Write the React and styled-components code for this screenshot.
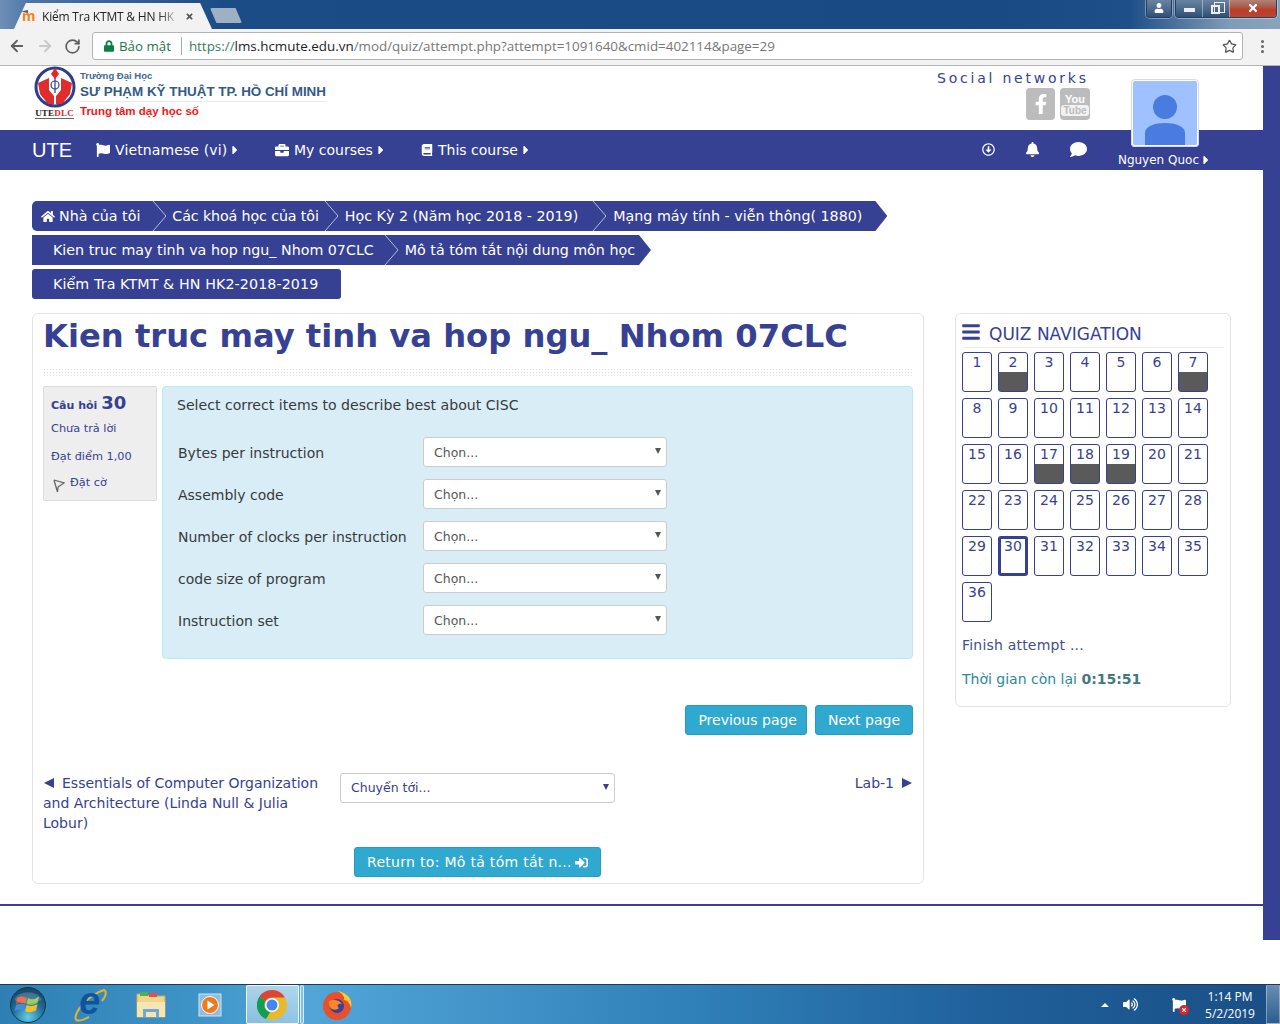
import React from 'react';
import styled, { createGlobalStyle } from 'styled-components';
import { FaHome, FaFlag, FaBriefcase, FaBook, FaBell, FaComment, FaRegArrowAltCircleDown, FaCaretRight, FaBars, FaSignInAlt, FaFacebookF, FaLock, FaTimes, FaUser, FaVolumeUp } from 'react-icons/fa';
import { ArrowLeft, ArrowRight, RotateCw, Star as StarIcon } from 'lucide-react';

const BLUE = '#364193';
const Global = createGlobalStyle`
  html, body { margin: 0; padding: 0; background: #fff; overflow: hidden; }
  * { box-sizing: border-box; }
  body { font-family: "DejaVu Sans", Verdana, sans-serif; font-size: 14px; color: #373a3c; }
`;
const Screen = styled.div`width: 1280px; height: 1024px; display: flex; flex-direction: column; overflow: hidden;`;

/* browser chrome */
const TabBar = styled.div`
  height: 29px; flex: none; display: flex; align-items: flex-end; padding-left: 14px; position: relative;
  background: linear-gradient(90deg, #6f8fb6 0, #4d75a6 30px, #1c4c86 220px, #1a4a84 1000px, #1f4f88 1130px, #7f9bb8 1230px, #8aa3bd 1280px);
`;
const Tab = styled.div`
  width: 198px; height: 26px; background: #f2f2f2; display: flex; align-items: center; padding: 0 0 0 8px; gap: 4px;
  clip-path: polygon(0 100%, 6% 0, 94% 0, 100% 100%);
  font: 12px "Open Sans", "Noto Sans", sans-serif; color: #222;
`;
const Favicon = styled.span`
  position: relative; color: #f98012; font: bold 15px/1 "Liberation Sans", sans-serif; width: 16px; flex: none; margin-top: -1px;
  &::before { content: ''; position: absolute; left: -1px; top: 2px; width: 7px; height: 3px; background: #555; clip-path: polygon(0 50%, 100% 0, 100% 100%); }
`;
const TabTitle = styled.span`width: 133px; flex: none; white-space: nowrap; letter-spacing: -.2px; mask-image: linear-gradient(90deg, #000 88%, rgba(0,0,0,.25) 100%);`;
const TabClose = styled(FaTimes)`color: #555; width: 9px; height: 9px; margin-left: 6px; flex: none;`;
const NewTab = styled.div`
  width: 32px; height: 15px; margin: 0 0 6px -2px; background: #9fafc4; border-radius: 2px;
  clip-path: polygon(0 0, 80% 0, 100% 100%, 20% 100%);
`;
const WinButtons = styled.div`position: absolute; right: 3px; top: -1px; display: flex; gap: 3px;`;
const WinGroup = styled.div`display: flex; height: 19px; border: 1px solid #2c3e58; border-top: 0; border-radius: 0 0 4px 4px; overflow: hidden; box-shadow: 0 0 0 1px rgba(255,255,255,.35);`;
const WinBtn = styled.div`
  width: ${p => p.$w}px; display: flex; align-items: center; justify-content: center; color: #fff;
  background: ${p => p.$red ? 'linear-gradient(#b0897f, #a85a48 45%, #c23a22 60%, #b3463a)' : 'linear-gradient(#6d86a2, #4f6d90 50%, #2e4f78)'};
  border-left: ${p => p.$first ? '0' : '1px solid rgba(255,255,255,.4)'};
`;
const MinBar = styled.span`display: block; width: 11px; height: 4px; background: #eee; margin-top: 4px;`;
const MaxBox = styled.span`
  position: relative; display: block; width: 9px; height: 9px; border: 2px solid #eee; margin: 2px 0 0 -2px;
  &::after { content: ''; position: absolute; left: 1px; top: -5px; width: 9px; height: 9px; border: 1px solid #eee; }
`;
const Toolbar = styled.div`
  height: 37px; flex: none; background: #f2f2f2; border-bottom: 1px solid #b5b5b5; display: flex; align-items: center; padding: 0 0 2px 8px;
`;
const NavIcon = styled.span`width: 18px; margin-right: 10px; display: flex; color: ${p => p.$off ? '#c8c8c8' : '#5f5f5f'};`;
const Omni = styled.div`
  width: 1151px; height: 28px; background: #fff; border: 1px solid #b4b4b4; border-radius: 3px; display: flex; align-items: center; padding: 0 5px 0 11px;
  font: 13.4px "Open Sans", "Noto Sans", sans-serif; white-space: nowrap;
`;
const Lock = styled(FaLock)`color: #0b8043; width: 10px; height: 12px; margin-right: 5px;`;
const Secure = styled.span`color: #1a7a4a; font-size: 13.3px; padding-right: 10px; border-right: 1px solid #aaa; margin-right: 7px; line-height: 18px;`;
const Https = styled.span`color: #2f7f5f;`;
const Host = styled.span`color: #222;`;
const UrlRest = styled.span`color: #777; flex: 1;`;
const Star = styled(StarIcon)`color: #555; width: 15px; height: 15px;`;
const Dots = styled.span`margin-left: 18px; display: flex; flex-direction: column; gap: 2px;`;
const Dot = styled.i`display: block; width: 3px; height: 3px; border-radius: 50%; background: #666;`;

/* page */
const Viewport = styled.div`flex: 1; display: flex; min-height: 0;`;
const Page = styled.div`width: 1263px; flex: none; display: flex; flex-direction: column;`;
const Stripe = styled.div`width: 17px; height: 874px; background: ${BLUE};`;
const Header = styled.header`position: relative; height: 64px; display: flex; justify-content: space-between; padding-left: 33px;`;
const Logo = styled.div`display: flex; gap: 4px;`;
const LogoMark = styled.div`width: 43px; display: flex; flex-direction: column; align-items: center;`;
const LogoTag = styled.div`font: bold 9px/9px "Liberation Serif", serif; color: #222; border-bottom: 1px solid #666; margin-top: 1px; white-space: nowrap; letter-spacing: .2px;`;
const LogoRed = styled.span`color: #d62c2c;`;
const LogoText = styled.div`padding-top: 4px; font-family: "Liberation Sans", sans-serif;`;
const LogoSmall = styled.div`font-size: 9.5px; line-height: 11px; font-weight: bold; color: #3f6690;`;
const LogoBig = styled.div`font-size: 13.4px; line-height: 17px; font-weight: bold; color: #345a88; padding: 2px 0 1px; border-bottom: 1px solid #e8e8e8; white-space: nowrap; width: 246px;`;
const LogoRedText = styled.div`font-size: 11.5px; font-weight: bold; color: #f01818; line-height: 14px; padding-top: 2px;`;
const Social = styled.div`width: 327px; padding: 4px 0 0 1px;`;
const SocialTitle = styled.div`font: 14px/16px "DejaVu Sans", sans-serif; letter-spacing: 2.78px; color: ${BLUE}; white-space: nowrap;`;
const SocialIcons = styled.div`display: flex; gap: 5px; padding-left: 89px; margin-top: 2px;`;
const SocialIcon = styled.div`
  width: ${p => p.$w}px; height: 32px; background: #bcbcbc; border-radius: 4px; color: #fff; display: flex; flex-direction: column; align-items: center; justify-content: center;
  font: bold 11px/12px "Liberation Sans Narrow", "Liberation Sans", sans-serif;
`;
const TubeBox = styled.span`background: #f2f2f2; color: #bcbcbc; border-radius: 3px; padding: 0 2px; font-size: 10px; line-height: 11px;`;
const Avatar = styled.div`
  position: absolute; left: 1131px; top: 13px; width: 68px; height: 68px; border: 2px solid #fff; outline: 1px solid #d5d9f2; outline-offset: -1px; border-radius: 4px; background: #9fc1ff; z-index: 2; overflow: hidden;
`;
const Nav = styled.nav`height: 40px; background: ${BLUE}; display: flex; align-items: center; padding-left: 32px; color: #fff;`;
const Brand = styled.div`width: 64px; font: 20px "Liberation Sans", sans-serif;`;
const NavItem = styled.div`width: ${p => p.$w}px; display: flex; align-items: center; gap: 5px; font-size: 14px; letter-spacing: ${p => p.$ls || 0}px; white-space: nowrap;
  svg { flex: none; }
`;
const Caret = styled(FaCaretRight)`width: 8px; height: 14px; margin-left: -1px;`;
const NavRight = styled.div`margin-left: auto; display: flex; align-items: center; padding-right: 53px;`;
const NavBtn = styled.span`display: flex; width: ${p => p.$w}px; font-size: 15px;`;
const UserName = styled.div`align-self: flex-end; font-size: 12px; display: flex; align-items: center; gap: 4px; white-space: nowrap; margin-left: 22px; line-height: 18px;`;
const NavRightFull = styled(NavRight)`height: 100%; padding-bottom: 1px;`;
const Content = styled.div`padding: 31px 0 0 32px;`;
const Crumbs = styled.div`display: flex; flex-direction: column; gap: 4px; align-items: flex-start;`;
const CrumbRow = styled.div`
  height: 30px; background: ${BLUE}; color: #fff; display: flex; align-items: center; white-space: nowrap; font-size: 14.25px; letter-spacing: ${p => p.$ls || 0}px; padding: 0 ${p => p.$pr}px 0 ${p => p.$pl}px;
  border-radius: ${p => p.$radius};
  ${p => p.$pointed ? 'clip-path: polygon(0 0, calc(100% - 12px) 0, 100% 50%, calc(100% - 12px) 100%, 0 100%);' : ''}
`;
const CrumbTight = styled.span`letter-spacing: -.12px;`;
const CrumbHome = styled(FaHome)`width: 14px; height: 13px; margin-right: 4px;`;
const CrumbSep = styled.svg`width: 15px; height: 30px; margin: 0 ${p => p.$r}px 0 ${p => p.$l}px; flex: none;`;
const Columns = styled.div`display: flex; align-items: flex-start; margin-top: 14px; gap: 31px;`;
const MainCard = styled.main`width: 892px; height: 571px; background: #fff; border: 1px solid #e3e3e3; border-radius: 6px; padding: 0 10px;`;
const Title = styled.h1`margin: 0; height: 46px; font: bold 32.2px/44px "DejaVu Sans", sans-serif; color: ${BLUE}; white-space: nowrap;`;
const Dotted = styled.div`height: 9px; margin-top: 8px;
  background-image: radial-gradient(#dcdcdc 1px, transparent 1px); background-size: 3px 3px;`;
const Question = styled.div`display: flex; gap: 5px; margin-top: 9px;`;
const Info = styled.div`width: 114px; height: 115px; background: #eee; border: 1px solid #dcdcdc; border-radius: 2px; padding: 5px 7px; color: ${BLUE}; font-size: 11.3px;`;
const InfoNo = styled.div`font-weight: bold; font-size: 11px; line-height: 22px; white-space: nowrap;`;
const InfoNum = styled.span`font-size: 18px;`;
const InfoLine = styled.div`line-height: 14px; margin-top: ${p => p.$mt}px; display: flex; align-items: center; white-space: nowrap;`;
const FlagIcon = styled.svg`width: 12px; height: 14px; margin: 2px 5px -4px 2px; flex: none;`;
const Formulation = styled.div`width: 751px; height: 273px; background: #d9edf7; border: 1px solid #bce8f1; border-radius: 4px; padding: 9px 14px 0 14px;`;
const QText = styled.div`line-height: 18px; margin-bottom: 23px; font-size: 14.1px;`;
const MatchRow = styled.div`display: flex; align-items: center; height: 30px; margin-bottom: 12px; padding-left: 1px;`;
const MatchLabel = styled.div`width: 245px; white-space: nowrap; padding-top: 2px;`;
const Select = styled.div`
  width: ${p => p.$w}px; height: 30px; background: #fff; border: 1px solid #ccc; border-radius: 3px; display: flex; align-items: center; justify-content: space-between; padding: 0 5px 0 10px; color: ${p => p.$color}; font-size: 12.5px; flex: none;
`;
const SelArrow = styled.i`width: 0; height: 0; border-left: 3px solid transparent; border-right: 3px solid transparent; border-top: 6px solid ${p => p.$color}; margin-top: -2px;`;
const PageButtons = styled.div`display: flex; justify-content: flex-end; gap: 8px; margin-top: 46px;`;
const Btn = styled.div`
  height: 30px; padding: 0 ${p => p.$pr || 12}px 0 12px; background: #2fa9d0; border: 1px solid #259dc3; border-radius: 3px; color: #fff; display: flex; align-items: center; gap: 3px; white-space: nowrap; font-size: 14px; letter-spacing: ${p => p.$ls || 0}px;
`;
const Activity = styled.div`display: grid; grid-template-columns: 297px 275px 1fr; margin-top: 38px; color: ${BLUE}; line-height: 20px;`;
const PrevLink = styled.div`width: 290px;`;
const PrevArrow = styled.i`display: inline-block; width: 0; height: 0; margin: 0 8px 0 1px; border-top: 5px solid transparent; border-bottom: 5px solid transparent; border-right: 10px solid ${BLUE};`;
const NextArrow = styled.i`display: inline-block; width: 0; height: 0; margin: 0 1px 0 8px; border-top: 5px solid transparent; border-bottom: 5px solid transparent; border-left: 10px solid ${BLUE};`;
const NextLink = styled.div`text-align: right;`;
const ReturnRow = styled.div`display: flex; padding-left: 311px; margin-top: 14px;`;
const SideCard = styled.aside`width: 276px; height: 394px; border: 1px solid #e3e3e3; border-radius: 6px; padding: 0 6px;`;
const SideHead = styled.div`display: flex; align-items: center; gap: 8px; height: 34px; border-bottom: 1px solid #eee; color: ${BLUE}; font-size: 17px; padding-top: 7px; white-space: nowrap;`;
const Bars = styled(FaBars)`width: 20px; height: 20px; margin: -4px 0 0 -1px;`;
const Grid = styled.div`display: grid; grid-template-columns: repeat(7, 30px); grid-auto-rows: 40px; column-gap: 6px; row-gap: 6px; margin-top: 4px;`;
const Cell = styled.div`
  position: relative; border: ${p => p.$cur ? '3px' : '1px'} solid ${BLUE}; border-radius: 3px; text-align: center; color: ${BLUE}; font-size: 14px; line-height: ${p => p.$cur ? '14px' : '18px'}; overflow: hidden;
  background: ${p => p.$flag ? 'linear-gradient(#fff 0, #fff 19px, #5a5a5a 19px)' : '#fff'};
`;
const Finish = styled.div`margin-top: 13px; line-height: 20px; color: #444d8f; letter-spacing: .2px;`;
const Timer = styled.div`margin-top: 14px; line-height: 20px; color: #2b8a99; white-space: nowrap;`;
const TimerStrong = styled.b`color: #42797f;`;
const FootLine = styled.div`height: 2px; background: ${BLUE}; margin-top: 20px;`;

/* taskbar */
const Taskbar = styled.div`
  position: relative; height: 40px; flex: none; border-top: 1px solid #22384f; display: flex; align-items: center;
  background: linear-gradient(90deg, #2d7fb4 0, #3f94c7 200px, #52a6d8 300px, #2f7fb8 700px, #1f5f9a 1000px, #1a4f85 1280px);
`;
const TaskIcon = styled.div`position: absolute; left: ${p => p.$x}px; top: 2px; width: 36px; height: 36px; display: flex; align-items: center; justify-content: center;`;
const IeLetter = styled.span`position: absolute; left: 7px; top: -8px; font: italic bold 38px/44px "Liberation Sans", sans-serif; color: #0b55a3;`;
const TaskActive = styled.div`position: absolute; left: 246px; top: 0; width: 53px; height: 39px; background: linear-gradient(rgba(255,255,255,.55), rgba(255,255,255,.35)); border: 1px solid rgba(255,255,255,.85); border-radius: 2px;`;
const TaskEdge = styled.div`position: absolute; left: 300px; top: 0; width: 4px; height: 39px; background: rgba(255,255,255,.3); border: 1px solid rgba(255,255,255,.7); border-radius: 2px;`;
const Tray = styled.div`margin-left: auto; display: flex; align-items: center; color: #fff; height: 100%;`;
const TrayUp = styled.i`width: 0; height: 0; border-left: 4px solid transparent; border-right: 4px solid transparent; border-bottom: 4px solid #fff; margin-right: 14px;`;
const TrayFlagWrap = styled.span`position: relative; display: flex; margin-left: 34px;`;
const TrayBadge = styled.i`position: absolute; right: -3px; bottom: -3px; width: 10px; height: 10px; border-radius: 50%; background: #e0262c; color: #fff; display: flex; align-items: center; justify-content: center;`;
const Clock = styled.div`width: 72px; text-align: center; font: 12px/17px "Open Sans", "Noto Sans", sans-serif; margin-left: 8px;`;
const ShowDesk = styled.div`width: 14px; height: 100%; border: 1px solid rgba(255,255,255,.35); background: linear-gradient(rgba(255,255,255,.35), rgba(255,255,255,.08));`;

const HC = ({ l = 0, r = 0 }) => (
  <CrumbSep $l={l} $r={r} viewBox="0 0 15 30"><path d="M1 0 L14 15 L1 30" fill="none" stroke="#b6bbdd" strokeWidth="1" /></CrumbSep>
);
const flagged = new Set([2, 7, 17, 18, 19]);
const labels = ['Bytes per instruction', 'Assembly code', 'Number of clocks per instruction', 'code size of program', 'Instruction set'];

const LogoSvg = () => (
  <svg width="42" height="42" viewBox="0 0 42 42">
    <circle cx="21" cy="21" r="19" fill="#fff" stroke="#2b3f8e" strokeWidth="3" />
    <path d="M21 2 L25 8 L21 13 L17 8Z" fill="#e22" />
    <path d="M4 17 L15 12 L15 24 L20 30 L20 38 L14 38 L6 28Z" fill="#e22b2b" />
    <path d="M38 17 L27 12 L27 24 L22 30 L22 38 L28 38 L36 28Z" fill="#e22b2b" />
    <circle cx="21" cy="19" r="4" fill="none" stroke="#2b3f8e" strokeWidth="1.2" />
    <path d="M21 12 V27" stroke="#2b3f8e" strokeWidth="1.2" />
  </svg>
);
const Chrome = () => (
  <svg width="30" height="30" viewBox="0 0 30 30">
    <circle cx="15" cy="15" r="15" fill="#e8b92c" />
    <path d="M15 0 A15 15 0 0 1 28 7.5 L15 7.5 A7.5 7.5 0 0 0 8.5 11 L2.5 6.5 A15 15 0 0 1 15 0Z" fill="#db4437" />
    <path d="M2.5 6.5 L8.5 11 A7.5 7.5 0 0 0 13 22.3 L9 29 A15 15 0 0 1 2.5 6.5Z" fill="#0f9d58" />
    <circle cx="15" cy="15" r="7" fill="#fff" /><circle cx="15" cy="15" r="5.5" fill="#4285f4" />
  </svg>
);
const Orb = () => (
  <svg width="36" height="36" viewBox="0 0 36 36">
    <defs><radialGradient id="orbG" cx="50%" cy="85%" r="75%"><stop offset="0" stopColor="#5fd0e8" /><stop offset=".6" stopColor="#1f6d9a" /><stop offset="1" stopColor="#174a6c" /></radialGradient></defs>
    <circle cx="18" cy="18" r="17.5" fill="url(#orbG)" stroke="#16364f" />
    <path d="M7 11 Q11 8 17 11 L15.5 17 Q11 14.5 6 17Z" fill="#e8502a" />
    <path d="M18 11 Q23 14 29 9.5 L27.5 16 Q22 19.5 16.5 17Z" fill="#8cc13f" />
    <path d="M6 18 Q11 15.5 15.5 18 L14 24 Q9 21.5 4.5 24Z" fill="#3d8fd8" />
    <path d="M16.5 18 Q22 20.5 27.5 17 L26 23.5 Q20 26.5 15 24.5Z" fill="#f3bd2c" />
    <path d="M4 13 A15 12 0 0 1 32 13 Q18 20 4 13Z" fill="#fff" opacity=".18" />
  </svg>
);
const IE = () => (
  <svg width="34" height="34" viewBox="0 0 34 34">
    <path d="M3 32 C0 25 15 7 31 2 C34 3 33 9 29 13" fill="none" stroke="#e3b32c" strokeWidth="2" />
    <path d="M3 32 C7 34 12 31 16 29" fill="none" stroke="#e3b32c" strokeWidth="2" />
  </svg>
);
const Folder = () => (
  <svg width="32" height="30" viewBox="0 0 32 30">
    <path d="M2 4 H12 L14 6 H30 V27 H2Z" fill="#f0d48a" stroke="#c9a95e" />
    <rect x="5" y="2" width="8" height="4" fill="#4caf50" /><rect x="14" y="3" width="8" height="4" fill="#e05252" />
    <rect x="2" y="12" width="28" height="15" fill="#f7e5b3" />
    <path d="M8 27 V19 H24 V27 H21 V22 H11 V27Z" fill="#6fa8d6" />
  </svg>
);
const Media = () => (
  <svg width="28" height="28" viewBox="0 0 28 28">
    <rect x="2" y="3" width="22" height="22" fill="#8dbde0" stroke="#cfe3f2" />
    <circle cx="13" cy="14" r="8.5" fill="#ee7a1d" stroke="#fff" />
    <path d="M10.5 9.5 L17.5 14 L10.5 18.5Z" fill="#fff" />
  </svg>
);
const Firefox = () => (
  <svg width="32" height="32" viewBox="0 0 32 32">
    <circle cx="16" cy="17" r="14" fill="#e8502a" />
    <path d="M17 2 C27 4 32 11 30 19 C29 14 26 11 23 11 C24 7 21 5 17 2Z" fill="#ffcb2e" />
    <circle cx="16" cy="17" r="7" fill="#3b3f9e" />
    <path d="M8 12 C12 10 19 11 21 15 C17 14 15 17 18 19 C14 23 7 20 8 12Z" fill="#f7892b" />
  </svg>
);

export default function App() {
  return (
    <Screen>
      <Global />
      <TabBar>
        <Tab><Favicon>m</Favicon><TabTitle>Kiểm Tra KTMT &amp; HN HK</TabTitle><TabClose /></Tab>
        <NewTab />
        <WinButtons>
          <WinGroup><WinBtn $w={24} $first><FaUser size={10} /></WinBtn></WinGroup>
          <WinGroup>
            <WinBtn $w={26} $first><MinBar /></WinBtn>
            <WinBtn $w={27}><MaxBox /></WinBtn>
            <WinBtn $w={47} $red><FaTimes size={12} /></WinBtn>
          </WinGroup>
        </WinButtons>
      </TabBar>
      <Toolbar>
        <NavIcon><ArrowLeft size={18} strokeWidth={2.4} /></NavIcon>
        <NavIcon $off><ArrowRight size={18} strokeWidth={2.4} /></NavIcon>
        <NavIcon><RotateCw size={17} strokeWidth={2.4} /></NavIcon>
        <Omni>
          <Lock /><Secure>Bảo mật</Secure>
          <Https>https://</Https><Host>lms.hcmute.edu.vn</Host><UrlRest>/mod/quiz/attempt.php?attempt=1091640&amp;cmid=402114&amp;page=29</UrlRest>
          <Star />
        </Omni>
        <Dots><Dot /><Dot /><Dot /></Dots>
      </Toolbar>
      <Viewport>
        <Page>
          <Header>
            <Logo>
              <LogoMark>
                <LogoSvg />
                <LogoTag>UTE<LogoRed>DLC</LogoRed></LogoTag>
              </LogoMark>
              <LogoText>
                <LogoSmall>Trường Đại Học</LogoSmall>
                <LogoBig>SƯ PHẠM KỸ THUẬT TP. HỒ CHÍ MINH</LogoBig>
                <LogoRedText>Trung tâm dạy học số</LogoRedText>
              </LogoText>
            </Logo>
            <Social>
              <SocialTitle>Social networks</SocialTitle>
              <SocialIcons>
                <SocialIcon $w={29}><FaFacebookF size={20} /></SocialIcon>
                <SocialIcon $w={30}>You<TubeBox>Tube</TubeBox></SocialIcon>
              </SocialIcons>
            </Social>
            <Avatar>
              <svg width="64" height="64" viewBox="0 0 64 64">
                <circle cx="32" cy="26" r="12" fill="#4a7be0" />
                <path d="M12 64 V52 C12 45 22 42 32 42 C42 42 52 45 52 52 V64Z" fill="#4a7be0" />
              </svg>
            </Avatar>
          </Header>
          <Nav>
            <Brand>UTE</Brand>
            <NavItem $w={179} $ls={0.12}><FaFlag size={14} />Vietnamese (vi)<Caret /></NavItem>
            <NavItem $w={146}><FaBriefcase size={14} />My courses<Caret /></NavItem>
            <NavItem $w={120}><FaBook size={12} />This course<Caret /></NavItem>
            <NavRightFull>
              <NavBtn $w={43}><FaRegArrowAltCircleDown size={13} /></NavBtn>
              <NavBtn $w={45}><FaBell size={15} /></NavBtn>
              <NavBtn $w={26}><FaComment size={17} /></NavBtn>
              <UserName>Nguyen Quoc<Caret /></UserName>
            </NavRightFull>
          </Nav>
          <Content>
            <Crumbs>
              <CrumbRow $pl={9} $pr={25} $radius="5px 0 0 5px" $pointed>
                <CrumbHome />Nhà của tôi<HC l={12} r={5} /><CrumbTight>Các khoá học của tôi</CrumbTight><HC l={5} r={6} />Học Kỳ 2 (Năm học 2018 - 2019)<HC l={14} r={6} />Mạng máy tính - viễn thông( 1880)
              </CrumbRow>
              <CrumbRow $pl={21} $pr={16} $radius="0" $pointed>
                Kien truc may tinh va hop ngu_ Nhom 07CLC<HC l={10} r={6} />Mô tả tóm tắt nội dung môn học
              </CrumbRow>
              <CrumbRow $pl={21} $pr={23} $radius="3px" $ls={0.1}>Kiểm Tra KTMT &amp; HN HK2-2018-2019</CrumbRow>
            </Crumbs>
            <Columns>
              <MainCard>
                <Title>Kien truc may tinh va hop ngu_ Nhom 07CLC</Title>
                <Dotted />
                <Question>
                  <Info>
                    <InfoNo>Câu hỏi <InfoNum>30</InfoNum></InfoNo>
                    <InfoLine $mt={5}>Chưa trả lời</InfoLine>
                    <InfoLine $mt={14}>Đạt điểm 1,00</InfoLine>
                    <InfoLine $mt={12}>
                      <FlagIcon viewBox="0 0 12 14"><path d="M1 1 L11 4 L5 8 L4.5 13 M1 1 L4.5 13" fill="none" stroke="#666" strokeWidth="1.3" /></FlagIcon>Đặt cờ
                    </InfoLine>
                  </Info>
                  <Formulation>
                    <QText>Select correct items to describe best about CISC</QText>
                    {labels.map(l => (
                      <MatchRow key={l}>
                        <MatchLabel>{l}</MatchLabel>
                        <Select $w={244} $color="#555"><span>Chọn...</span><SelArrow $color="#555" /></Select>
                      </MatchRow>
                    ))}
                  </Formulation>
                </Question>
                <PageButtons><Btn $pr={9}>Previous page</Btn><Btn>Next page</Btn></PageButtons>
                <Activity>
                  <PrevLink><PrevArrow />Essentials of Computer Organization and Architecture (Linda Null &amp; Julia Lobur)</PrevLink>
                  <Select $w={275} $color={BLUE}><span>Chuyển tới...</span><SelArrow $color={BLUE} /></Select>
                  <NextLink>Lab-1<NextArrow /></NextLink>
                </Activity>
                <ReturnRow><Btn $ls={0.3} $pr={12}>Return to: Mô tả tóm tắt n...<FaSignInAlt size={13} /></Btn></ReturnRow>
              </MainCard>
              <SideCard>
                <SideHead><Bars />QUIZ NAVIGATION</SideHead>
                <Grid>
                  {Array.from({ length: 36 }, (_, i) => i + 1).map(n => (
                    <Cell key={n} $flag={flagged.has(n)} $cur={n === 30}>{n}</Cell>
                  ))}
                </Grid>
                <Finish>Finish attempt ...</Finish>
                <Timer>Thời gian còn lại <TimerStrong>0:15:51</TimerStrong></Timer>
              </SideCard>
            </Columns>
          </Content>
          <FootLine />
        </Page>
        <Stripe />
      </Viewport>
      <Taskbar>
        <TaskIcon $x={10}><Orb /></TaskIcon>
        <TaskIcon $x={72}><IeLetter>e</IeLetter><IE /></TaskIcon>
        <TaskIcon $x={133}><Folder /></TaskIcon>
        <TaskIcon $x={193}><Media /></TaskIcon>
        <TaskActive /><TaskEdge />
        <TaskIcon $x={254}><Chrome /></TaskIcon>
        <TaskIcon $x={319}><Firefox /></TaskIcon>
        <Tray>
          <TrayUp /><FaVolumeUp size={15} />
          <TrayFlagWrap><FaFlag size={14} /><TrayBadge><FaTimes size={6} /></TrayBadge></TrayFlagWrap>
          <Clock>1:14 PM<br />5/2/2019</Clock>
          <ShowDesk />
        </Tray>
      </Taskbar>
    </Screen>
  );
}
